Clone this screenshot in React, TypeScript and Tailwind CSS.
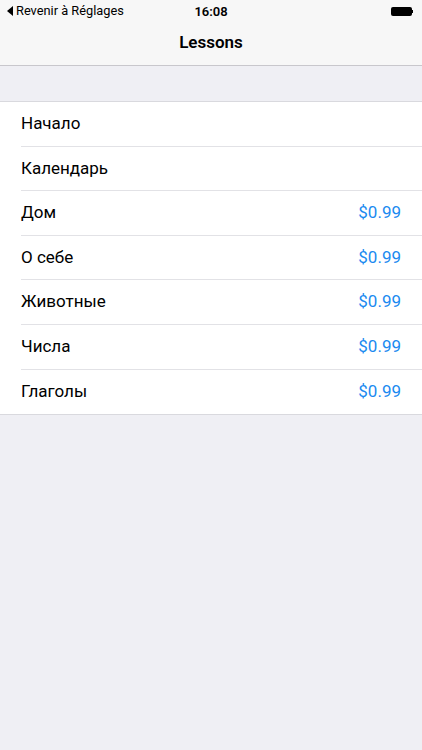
const lessons = [
  { name: "Начало", price: "" },
  { name: "Календарь", price: "" },
  { name: "Дом", price: "$0.99" },
  { name: "О себе", price: "$0.99" },
  { name: "Животные", price: "$0.99" },
  { name: "Числа", price: "$0.99" },
  { name: "Глаголы", price: "$0.99" },
];

export default function App() {
  return (
    <div
      className="min-h-[750px] w-[422px] bg-[#efeff4] text-black"
      style={{ fontFamily: "Roboto, 'Liberation Sans', sans-serif" }}
    >
      {/* status + nav bar */}
      <div className="border-b border-[#c8c7cc] bg-[#f7f7f7]">
        <div className="relative flex h-[22px] items-center px-[7px]">
          <div className="flex items-center gap-[2px] text-[12.8px] leading-none">
            <svg width="6" height="10" viewBox="0 0 6 10">
              <path d="M6 0 L0 5 L6 10 Z" fill="#000" />
            </svg>
            <span className="ml-[1px]">Revenir à Réglages</span>
          </div>
          <div className="absolute left-0 right-0 text-center text-[13px] font-semibold leading-none">16:08</div>
          <div className="ml-auto mr-[2px] flex items-center">
            <div className="h-[9px] w-[21px] rounded-[2px] bg-black" />
            <div className="h-[3px] w-[1.5px] bg-black" />
          </div>
        </div>
        <div className="flex h-[43px] items-center justify-center pb-[1px] text-[17px] font-semibold">Lessons</div>
      </div>

      <div className="h-[35px]" />

      <div className="border-y border-[#d9d9de] bg-white">
        {lessons.map((l, i) => (
          <div key={l.name} className="pl-[21px]">
            <div
              className={
                "flex h-[44.6px] items-center pr-[21px] text-[17px] " +
                (i < lessons.length - 1 ? "border-b border-[#e2e2e6]" : "")
              }
            >
              <span>{l.name}</span>
              {l.price && <span className="ml-auto text-[#1b8af0]">{l.price}</span>}
            </div>
          </div>
        ))}
      </div>
    </div>
  );
}
